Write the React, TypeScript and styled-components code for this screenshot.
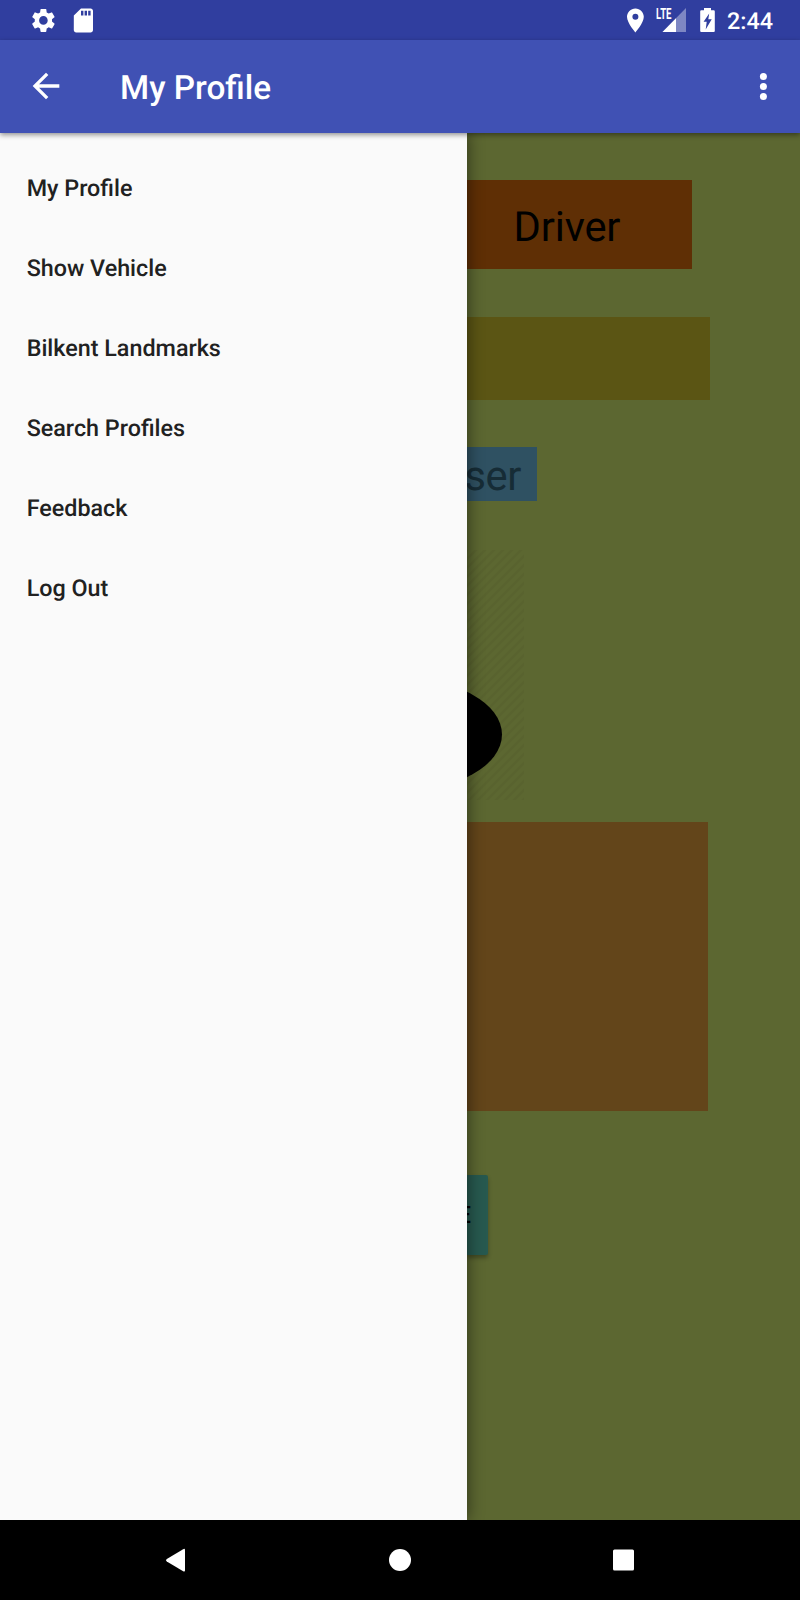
import React from "react";
import styled, { createGlobalStyle } from "styled-components";
import { MdArrowBack, MdPlace, MdSdCard, MdSettings } from "react-icons/md";

const GlobalStyle = createGlobalStyle`
  * { box-sizing: border-box; }
  body {
    margin: 0;
    font-family: Roboto, "Liberation Sans", sans-serif;
    text-rendering: geometricPrecision;
    background: #000;
  }
`;

const Screen = styled.div`
  width: 800px;
  height: 1600px;
  display: flex;
  flex-direction: column;
  overflow: hidden;
`;

const StatusBar = styled.header`
  height: 40px;
  flex: none;
  display: flex;
  align-items: center;
  justify-content: space-between;
  padding: 0 27px 0 28.9px;
  background: #303e9f;
  color: #fff;
`;

const StatusGroup = styled.div<{ $gap: number }>`
  display: flex;
  align-items: center;
  gap: ${(p) => p.$gap}px;

  svg { display: block; flex: none; }
`;

const StatusIcons = styled.div`
  display: flex;
  align-items: center;
  width: 106.5px;

  svg { display: block; flex: none; }
`;

const BatterySlot = styled.span`
  margin-left: 12px;
`;

const Clock = styled.time`
  font-size: 23.33px;
  font-weight: 500;
  line-height: 40px;
  padding-top: 1px;
`;

const AppBar = styled.div`
  height: 93px;
  flex: none;
  display: flex;
  align-items: center;
  padding: 0 20px 0 25.5px;
  background: #4051b4;
  color: #fff;
  position: relative;
  z-index: 3;
  box-shadow: 0 2px 5px rgba(0, 0, 0, 0.42);
`;

const IconButton = styled.button`
  width: 40px;
  height: 40px;
  margin-bottom: 1px;
  padding: 0;
  border: 0;
  background: none;
  color: inherit;
  display: flex;
  align-items: center;
  flex: none;
`;

const Title = styled.h1`
  margin: 4px 0 0 54.5px;
  flex: 1;
  font-size: 33.33px;
  line-height: 40px;
  font-weight: 500;
`;

const Body = styled.div`
  height: 1387px;
  flex: none;
  display: flex;
`;

const Drawer = styled.nav`
  width: 467px;
  flex: none;
  padding-top: 14px;
  background: #fafafa;
  position: relative;
  z-index: 2;
  box-shadow: 2px 0 14px rgba(0, 0, 0, 0.42);
`;

const DrawerItem = styled.a`
  display: flex;
  align-items: center;
  height: 80px;
  padding: 1px 0 0 26.67px;
  color: #212121;
  font-size: 23.33px;
  font-weight: 500;
`;

const Page = styled.main`
  flex: 1;
  min-width: 0;
  display: flex;
  flex-direction: column;
  align-items: flex-start;
  background: #5c6731;
  overflow: hidden;
`;

const Panel = styled.section<{ $w: number; $h: number; $top: number; $color: string }>`
  width: ${(p) => p.$w}px;
  height: ${(p) => p.$h}px;
  margin-top: ${(p) => p.$top}px;
  flex: none;
  background: ${(p) => p.$color};
`;

const RolePanel = styled(Panel)`
  padding: 5px 0 0 46.5px;
  font-size: 41.67px;
  letter-spacing: -0.15px;
  line-height: 86px;
  color: #000;
`;

const NamePanel = styled(Panel)`
  display: flex;
  justify-content: flex-end;
  padding: 5px 16px 0 0;
  font-size: 41.67px;
  letter-spacing: -0.4px;
  line-height: 49px;
  color: #162c36;
`;

const Avatar = styled.svg`
  display: block;
  flex: none;
  margin-top: 49px;
`;

const SaveButton = styled.button`
  width: 21px;
  height: 80px;
  flex: none;
  margin-top: 64.5px;
  padding: 0 17px 0 0;
  border: 0;
  border-radius: 0 2px 2px 0;
  background: #27594f;
  box-shadow: 0 3px 4px rgba(0, 0, 0, 0.3);
`;

const ButtonLabel = styled.span`
  display: flex;
  justify-content: flex-end;
  font: 500 23.33px/27px Roboto, sans-serif;
  color: #000;
`;

const NavBar = styled.footer`
  height: 80px;
  flex: none;
  display: flex;
  align-items: center;
  justify-content: space-between;
  padding: 0 157px 0 156px;
  background: #000;
`;

const menu = ["My Profile", "Show Vehicle", "Bilkent Landmarks", "Search Profiles", "Feedback", "Log Out"];

const SignalIcon = () => (
  <svg width="39" height="26" viewBox="-7 0 39 26">
    <path d="M30 1V25H6.500Z" fill="#fff" opacity=".38" />
    <path d="M20 11.200V25H6.500Z" fill="#fff" />
    <path d="M0 0H16.500V13H0Z" fill="#303e9f" />
    <text x="0" y="12" fontSize="15.500" fontWeight="700" fill="#fff" textLength="15.5" lengthAdjust="spacingAndGlyphs">LTE</text>
  </svg>
);

const BatteryIcon = () => (
  <svg width="15" height="24" viewBox="0 0 15 24">
    <path fill="#fff" fillRule="evenodd" d="M4 0h7v2.300h2.700q1.100 0 1.100 1.100v19.500q0 1.100-1.100 1.100H1.300q-1.100 0-1.100-1.100V3.400q0-1.100 1.100-1.100H4ZM9.200 5.500L3.600 13.700H6.700L5.700 21.500L11.700 11.300H8.300Z" />
  </svg>
);

export default function App() {
  return (
    <Screen>
      <GlobalStyle />
      <StatusBar>
        <StatusGroup $gap={11.4}>
          <MdSettings size={28.8} />
          <MdSdCard size={28.8} />
        </StatusGroup>
        <StatusGroup $gap={0}>
          <StatusIcons>
            <MdPlace size={28.8} />
            <SignalIcon />
            <BatterySlot>
              <BatteryIcon />
            </BatterySlot>
          </StatusIcons>
          <Clock>2:44</Clock>
        </StatusGroup>
      </StatusBar>
      <AppBar>
        <IconButton aria-label="Back">
          <MdArrowBack size={40} />
        </IconButton>
        <Title>My Profile</Title>
        <IconButton aria-label="More options">
          <svg width="40" height="40" viewBox="0 0 40 40" fill="#fff">
            <circle cx="23.400" cy="10.500" r="3.500" />
            <circle cx="23.400" cy="20.500" r="3.500" />
            <circle cx="23.400" cy="30.500" r="3.500" />
          </svg>
        </IconButton>
      </AppBar>
      <Body>
        <Drawer>
          {menu.map((label) => (
            <DrawerItem key={label}>{label}</DrawerItem>
          ))}
        </Drawer>
        <Page>
          <RolePanel $w={225} $h={89} $top={47} $color="#5f2f05">Driver</RolePanel>
          <Panel $w={243} $h={83} $top={48} $color="#5b5514" />
          <NamePanel $w={70} $h={53.5} $top={47} $color="#2f5162">ser</NamePanel>
          <Avatar width="57" height="250" viewBox="0 0 57 250">
            <defs>
              <pattern id="hatch" width="9" height="9" patternUnits="userSpaceOnUse">
                <path d="M-2 2L2-2M0 9L9 0M7 11L11 7" stroke="#000" strokeOpacity=".035" strokeWidth="2.500" />
              </pattern>
            </defs>
            <rect width="57" height="250" fill="url(#hatch)" />
            <ellipse cx="-67" cy="184.500" rx="102" ry="56.600" fill="#000" />
          </Avatar>
          <Panel $w={241} $h={288.5} $top={22.5} $color="#63451a" />
          <SaveButton>
            <ButtonLabel>E</ButtonLabel>
          </SaveButton>
        </Page>
      </Body>
      <NavBar>
        <svg width="31" height="40" viewBox="156 1540 31 40" fill="#fff">
          <path d="M183.200 1549.200q1.800-1 1.800 1v20q0 2-1.800 1L166.800 1561.500q-1.800-1.300 0-2.600Z" />
        </svg>
        <svg width="22" height="22" viewBox="0 0 22 22" fill="#fff">
          <circle cx="11" cy="11" r="11" />
        </svg>
        <svg width="30" height="22" viewBox="0 0 30 22" fill="#fff">
          <rect x="0" y=".5" width="21" height="21" rx="1.500" />
        </svg>
      </NavBar>
    </Screen>
  );
}
